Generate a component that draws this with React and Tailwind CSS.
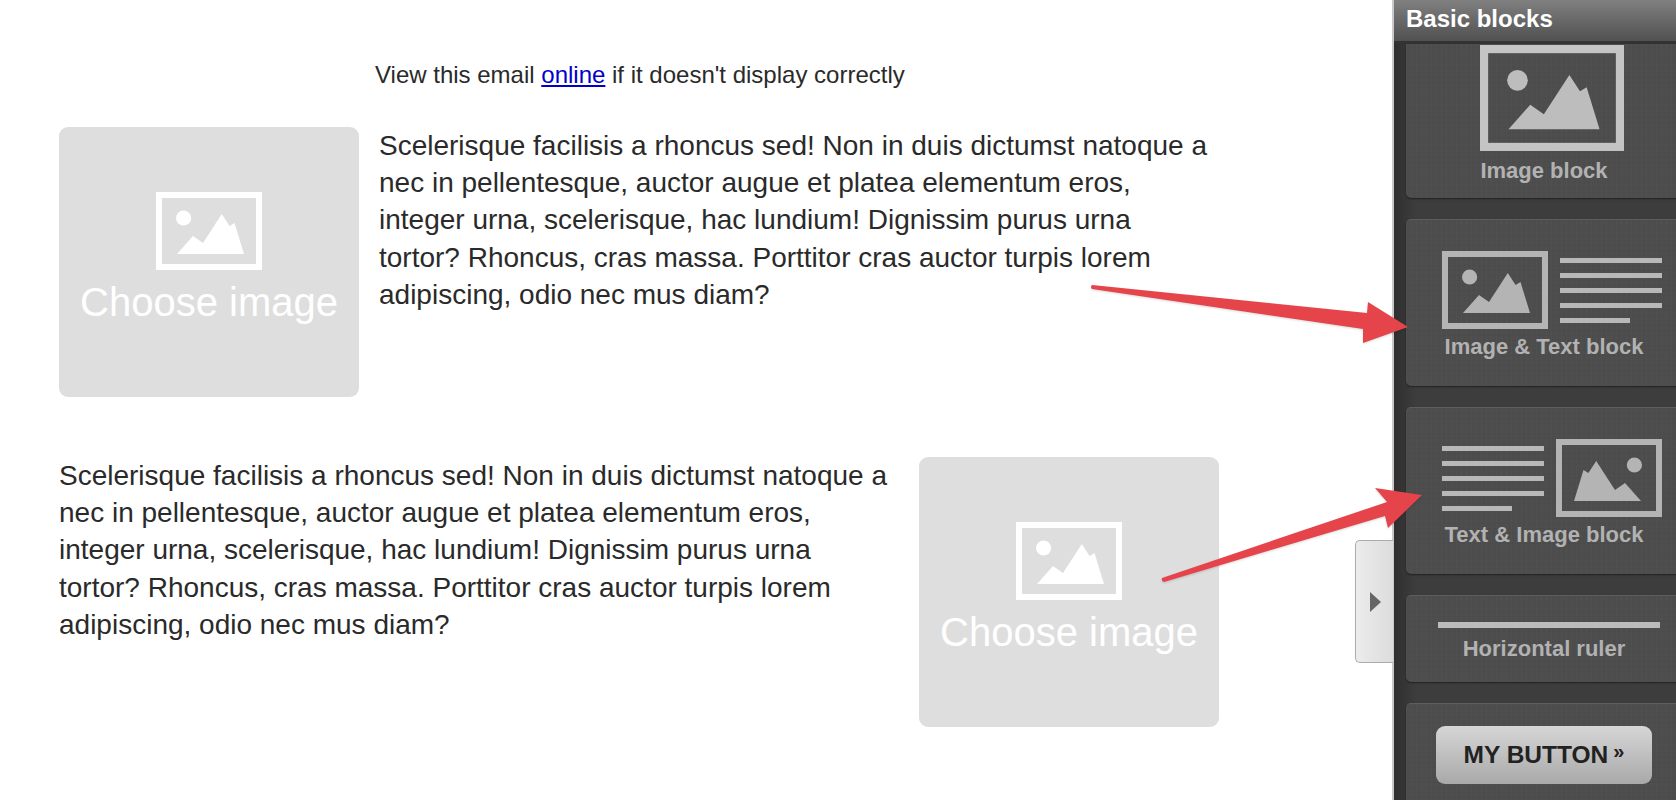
import React from 'react'

const loremLines = [
  'Scelerisque facilisis a rhoncus sed! Non in duis dictumst natoque a',
  'nec in pellentesque, auctor augue et platea elementum eros,',
  'integer urna, scelerisque, hac lundium! Dignissim purus urna',
  'tortor? Rhoncus, cras massa. Porttitor cras auctor turpis lorem',
  'adipiscing, odio nec mus diam?',
]

function PictureIcon({ className, flip, fill = '#fff', frame = '#fff' }) {
  return (
    <svg viewBox="0 0 106 78" className={`${className} ${flip ? '-scale-x-100' : ''}`}>
      <rect x="3" y="3" width="100" height="72" fill="none" stroke={frame} strokeWidth="6" />
      <circle cx="27.6" cy="26" r="7.6" fill={fill} />
      <path d="M21 62 L37 44 L47 51 L65.8 22 L73.6 34 L78.5 31 L88 62 Z" fill={fill} />
    </svg>
  )
}

function ChooseImage() {
  return (
    <div className="flex h-[270px] w-[300px] flex-none flex-col items-center rounded-[9px] bg-[#dedede] pt-[65px]">
      <PictureIcon className="h-[78px] w-[106px]" />
      <div className="mt-[10px] text-[40px] leading-[44px] whitespace-nowrap text-white">Choose image</div>
    </div>
  )
}

function Lorem() {
  return (
    <div className="text-[28px] leading-[37.2px] text-[#2a2a2a]">
      {loremLines.map((line) => (
        <div key={line} className="whitespace-nowrap">
          {line}
        </div>
      ))}
    </div>
  )
}

function TextBars() {
  return (
    <div className="flex w-[102px] flex-col gap-[10px]">
      <div className="h-[5px] bg-[#b8b8b8]" />
      <div className="h-[5px] bg-[#b8b8b8]" />
      <div className="h-[5px] bg-[#b8b8b8]" />
      <div className="h-[5px] bg-[#b8b8b8]" />
      <div className="h-[5px] w-[70px] bg-[#b8b8b8]" />
    </div>
  )
}

function Card({ className, children }) {
  return (
    <div
      className={`ml-[12px] w-[276px] flex-none rounded-[5px] border-t border-[#5e5e5e] bg-[#4d4d4d] bg-[repeating-linear-gradient(90deg,rgba(255,255,255,0.02)_0,rgba(255,255,255,0.02)_1px,transparent_1px,transparent_5px),repeating-linear-gradient(0deg,rgba(0,0,0,0.025)_0,rgba(0,0,0,0.025)_1px,transparent_1px,transparent_5px)] shadow-[0_1px_2px_rgba(0,0,0,0.45)] ${className}`}
    >
      {children}
    </div>
  )
}

function Label({ children, className }) {
  return (
    <div className={`text-center text-[22px] leading-[24px] font-bold whitespace-nowrap text-[#b2b2b2] ${className}`}>
      {children}
    </div>
  )
}

function Sidebar() {
  return (
    <aside className="flex h-full w-[284px] flex-none flex-col overflow-hidden border-l-[2px] border-[#c9c9c9] bg-[#3c3c3c]">
      <div className="flex h-[44px] flex-none items-start border-b-[3px] border-[#333] bg-gradient-to-b from-[#808080] to-[#515151] pl-[12px] pt-[5px] text-[24px] leading-[27px] font-bold text-white">
        Basic blocks
      </div>
      <div className="flex flex-1 flex-col bg-gradient-to-r from-[#2f2f2f] from-0% to-[#3d3d3d] to-[8%]">
        <Card className="h-[154px] rounded-t-none border-t-0 pl-[74px] pt-[1px]">
          <PictureIcon className="h-[106px] w-[144px]" fill="#bdbdbd" frame="#c4c4c4" />
          <Label className="mt-[8px] w-[128px]">Image block</Label>
        </Card>
        <Card className="mt-[21px] h-[167px] pl-[36px] pt-[31px]">
          <div className="flex items-center gap-[12px]">
            <PictureIcon className="h-[78px] w-[106px]" fill="#b4b4b4" frame="#b4b4b4" />
            <TextBars />
          </div>
          <Label className="mt-[6px] w-[204px]">Image &amp; Text block</Label>
        </Card>
        <Card className="mt-[21px] h-[167px] pl-[36px] pt-[31px]">
          <div className="flex items-center gap-[12px]">
            <TextBars />
            <PictureIcon className="h-[78px] w-[106px]" flip fill="#b4b4b4" frame="#b4b4b4" />
          </div>
          <Label className="mt-[6px] w-[204px]">Text &amp; Image block</Label>
        </Card>
        <Card className="mt-[21px] h-[87px] pl-[32px] pt-[26px]">
          <div className="h-[6px] w-[222px] bg-[#bcbcbc]" />
          <Label className="mt-[9px] w-[212px]">Horizontal ruler</Label>
        </Card>
        <Card className="mt-[21px] h-[120px] pl-[30px] pt-[22px]">
          <div className="flex h-[58px] w-[216px] items-center justify-center rounded-[9px] bg-gradient-to-b from-[#d6d6d6] to-[#a9a9a9] text-[24.5px] font-bold text-[#222]">
            MY BUTTON
            <span className="mb-[8px] ml-[5px] text-[20px] leading-none">»</span>
          </div>
        </Card>
      </div>
    </aside>
  )
}

function Arrows() {
  return (
    <svg viewBox="0 0 1676 800" className="pointer-events-none absolute inset-0 h-[800px] w-[1676px] drop-shadow-[0_1px_1px_rgba(0,0,0,0.15)]">
      <path
        d="M1092 285 L1367 313 L1368 302 L1408 327 L1363 343 L1363 329 L1092 289 Q1090 287 1092 285 Z"
        fill="#e5444a"
      />
      <path
        d="M1162 578 L1387 502 L1375 488 L1422 495 L1388 528 L1385 516 L1164 582 Q1161 581 1162 578 Z"
        fill="#e5444a"
      />
    </svg>
  )
}

export default function App() {
  return (
    <div className="relative flex h-screen w-full overflow-hidden bg-white font-['Liberation_Sans',Arial,sans-serif]">
      <main className="w-[1392px] flex-none pl-[59px] pt-[59px]">
        <div className="ml-[316px] text-[24px] leading-[32px] text-[#2a2a2a]">
          View this email{' '}
          <a href="#online" className="text-[#0000cc] underline">
            online
          </a>{' '}
          if it doesn't display correctly
        </div>
        <div className="mt-[4px] flex w-[1160px] gap-[20px] pt-[32px]">
          <ChooseImage />
          <Lorem />
        </div>
        <div className="mt-[60px] flex w-[1160px] justify-between">
          <Lorem />
          <ChooseImage />
        </div>
      </main>
      <Sidebar />
      <div className="absolute left-[1355px] top-[540px] flex h-[123px] w-[38px] items-center rounded-l-[5px] border border-r-0 border-[#ababab] bg-gradient-to-r from-[#ececec] to-[#dcdcdc] pl-[14px]">
        <div className="h-0 w-0 border-y-[10px] border-l-[11px] border-y-transparent border-l-[#666]" />
      </div>
      <Arrows />
    </div>
  )
}
